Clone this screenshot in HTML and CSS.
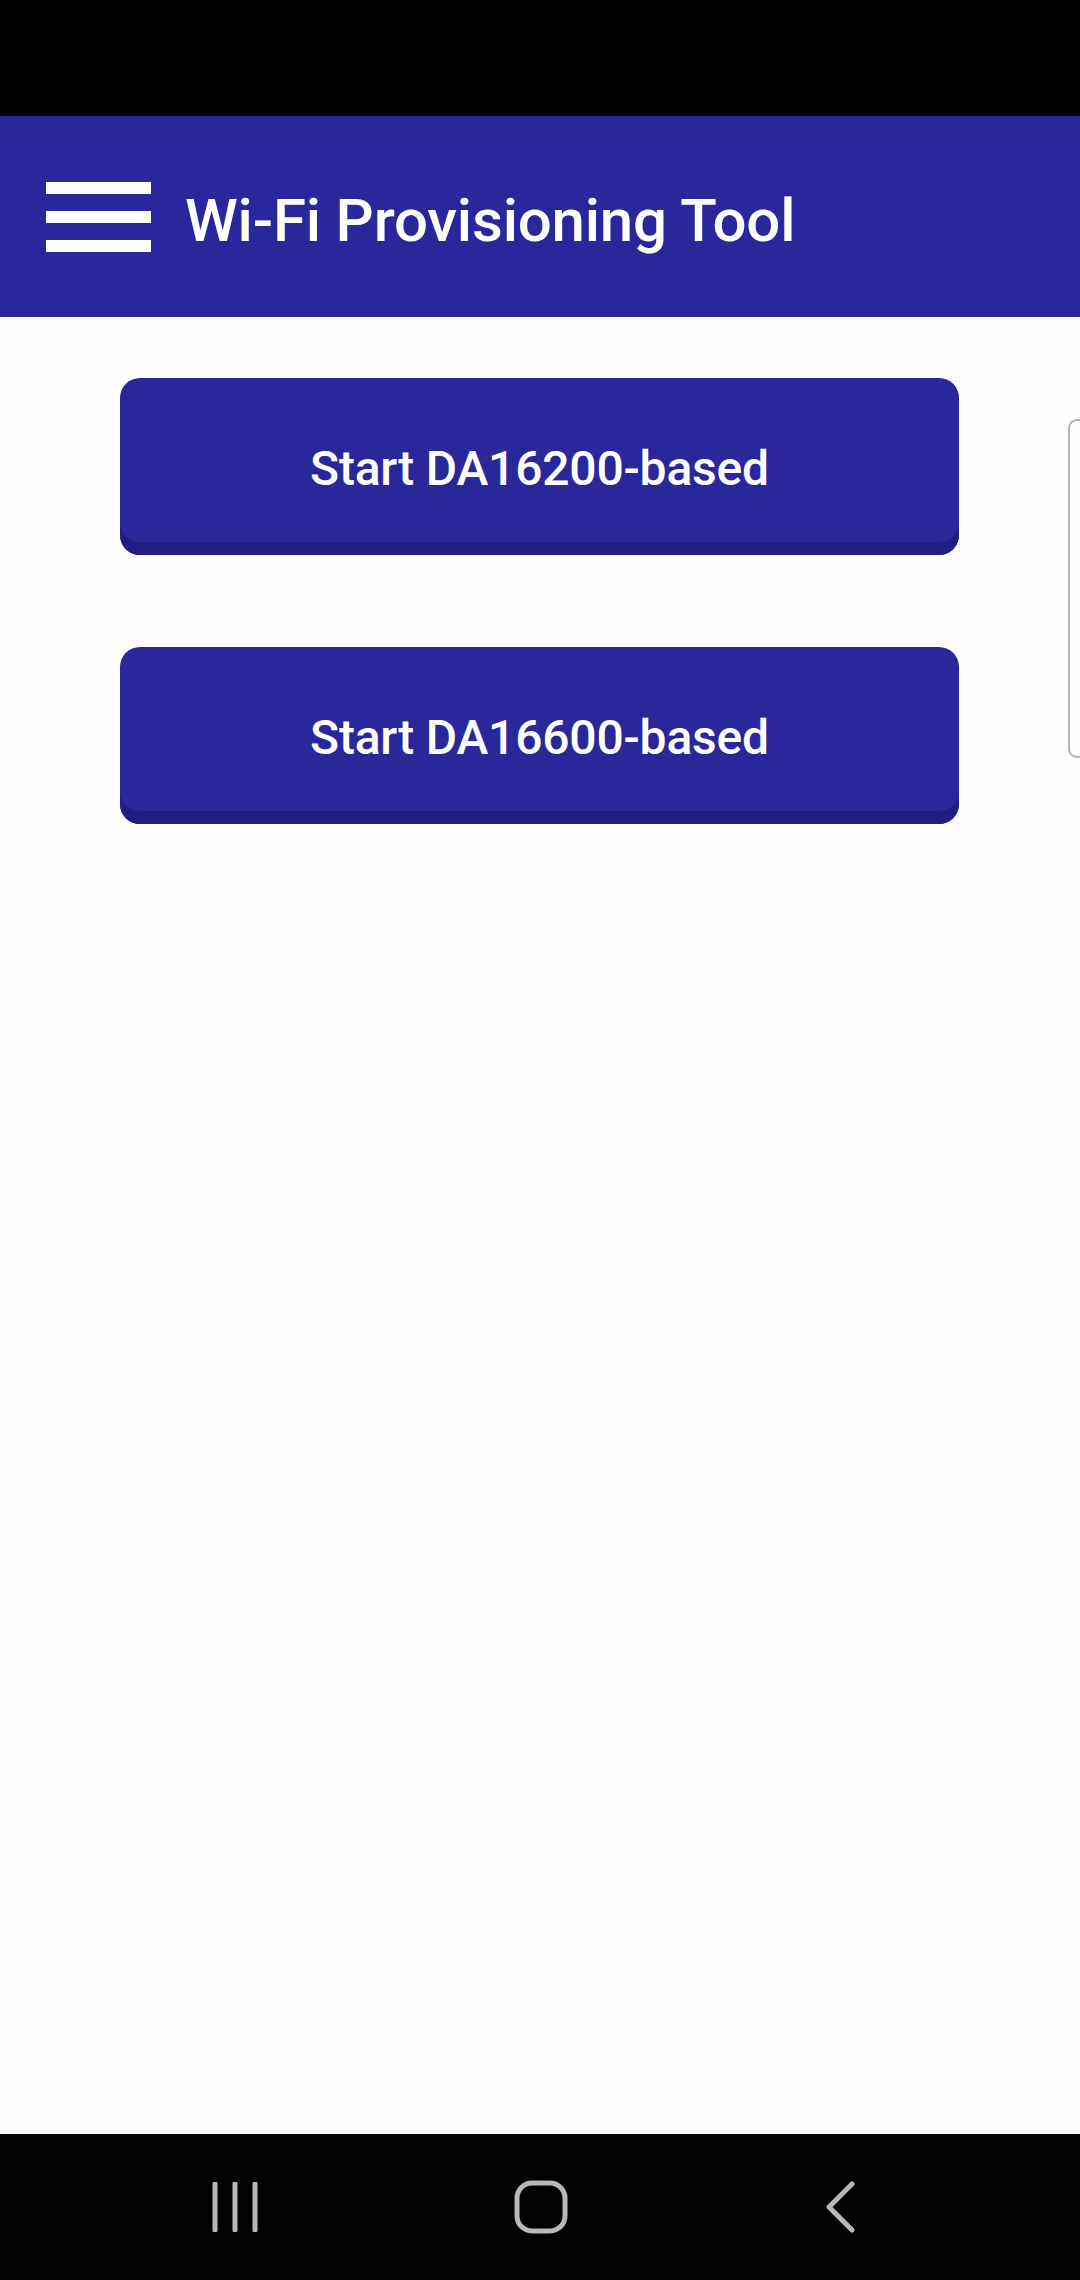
FILE: index.html
```html
<!DOCTYPE html>
<html lang="en">
<head>
    <meta charset="UTF-8">
    <meta name="viewport" content="width=device-width, initial-scale=1.0">
    <title>Wi-Fi Provisioning Tool</title>
    <link rel="stylesheet" href="styles.css">
</head>
<body>

<div class="status-bar"></div>

<header class="app-bar">
    <div class="menu-icon">
        <span></span>
        <span></span>
        <span></span>
    </div>
    <h1>Wi-Fi Provisioning Tool</h1>
</header>

<main class="content">
    <button class="start-button">Start DA16200-based</button>
    <button class="start-button">Start DA16600-based</button>
    <div class="edge-handle"></div>
</main>

<nav class="nav-bar">
    <svg class="nav-icon" width="46" height="50" viewBox="0 0 46 50">
        <line x1="3" y1="2" x2="3" y2="48" />
        <line x1="23" y1="2" x2="23" y2="48" />
        <line x1="43" y1="2" x2="43" y2="48" />
    </svg>
    <svg class="nav-icon" width="54" height="54" viewBox="0 0 54 54">
        <rect x="3" y="3" width="48" height="48" rx="15" ry="15" />
    </svg>
    <svg class="nav-icon" width="32" height="52" viewBox="0 0 32 52">
        <polyline points="28,3 5,26 28,49" />
    </svg>
</nav>

</body>
</html>
```

FILE: styles.css
```css
body {
    margin: 0;
    width: 1080px;
    height: 2280px;
    display: flex;
    flex-direction: column;
    font-family: Roboto, "Noto Sans", sans-serif;
    background-color: #fffdff;
    overflow: hidden;
}
.status-bar {
    height: 116px;
    background-color: #000;
}
.app-bar {
    height: 201px;
    background-color: #29279b;
    display: flex;
    align-items: center;
    padding-left: 46px;
    box-sizing: border-box;
}
.menu-icon {
    width: 105px;
    display: flex;
    flex-direction: column;
    gap: 17px;
}
.menu-icon span {
    height: 12px;
    background-color: #fff;
}
.app-bar h1 {
    margin: 0 0 0 34px;
    padding-top: 7px;
    color: #fff;
    font-size: 60px;
    font-weight: 500;
    letter-spacing: -0.2px;
}
.content {
    flex: 1;
    position: relative;
    display: flex;
    flex-direction: column;
    gap: 92px;
    padding: 61px 0 0 120px;
}
.start-button {
    width: 839px;
    height: 177px;
    border: none;
    border-radius: 20px;
    background-color: #2a279b;
    box-shadow: inset 0 -13px 0 #221d82;
    color: #fff;
    font-family: Roboto, "Noto Sans", sans-serif;
    font-size: 48px;
    font-weight: 500;
    letter-spacing: -0.2px;
    padding: 4px 0 0;
}
/* samsung edge panel handle */
.edge-handle {
    position: absolute;
    left: 1068px;
    top: 102px;
    width: 30px;
    height: 335px;
    border: 2px solid #b4b4b4;
    border-radius: 9px;
}
.nav-bar {
    height: 146px;
    background-color: #020103;
    display: flex;
    align-items: center;
    justify-content: space-between;
    padding: 0 224px 0 212px;
}
.nav-icon line,
.nav-icon rect,
.nav-icon polyline {
    fill: none;
    stroke: #b8b8b8;
    stroke-width: 5;
    stroke-linecap: round;
    stroke-linejoin: round;
}
```
